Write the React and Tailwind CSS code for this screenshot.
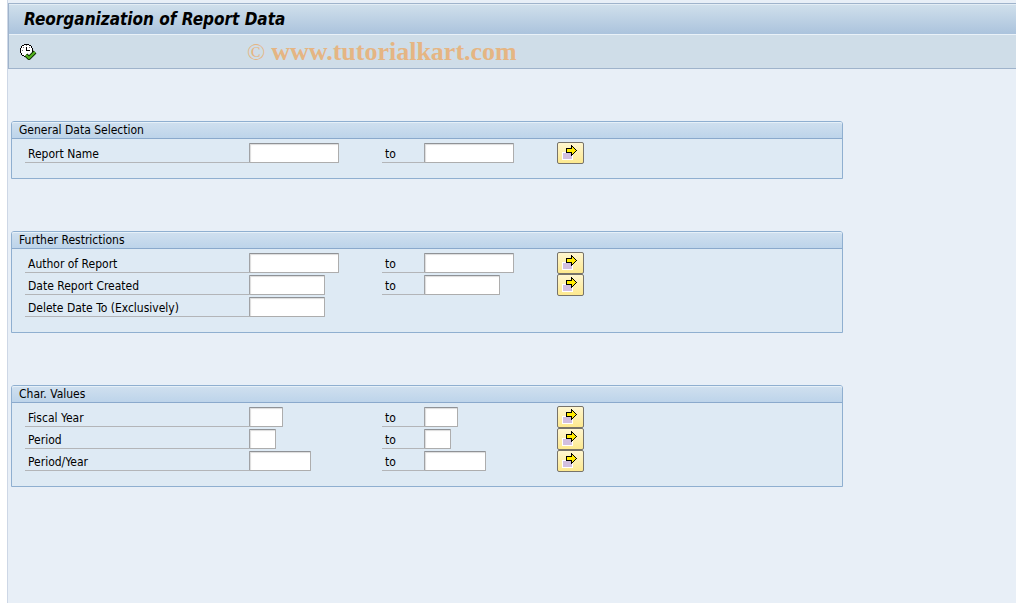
import React from 'react';

const groups = [
  {
    title: 'General Data Selection',
    rows: [{ id: 'report-name', label: 'Report Name', size: 'w-[90px]', range: true }],
  },
  {
    title: 'Further Restrictions',
    rows: [
      { id: 'author', label: 'Author of Report', size: 'w-[90px]', range: true },
      { id: 'created', label: 'Date Report Created', size: 'w-[76px]', range: true },
      { id: 'delete-to', label: 'Delete Date To (Exclusively)', size: 'w-[76px]', range: false },
    ],
  },
  {
    title: 'Char. Values',
    rows: [
      { id: 'fiscal-year', label: 'Fiscal Year', size: 'w-[34px]', range: true },
      { id: 'period', label: 'Period', size: 'w-[27px]', range: true },
      { id: 'period-year', label: 'Period/Year', size: 'w-[62px]', range: true },
    ],
  },
];

function ExecuteIcon() {
  return (
    <svg width="17" height="16" viewBox="0 0 17 16" aria-hidden="true">
      <g shapeRendering="crispEdges">
        <path d="M4 1h5v1h2v2h1v1h1v5h-1v2H4v-1H2V9H1V4h1V2h2z" fill="#fff" />
        <path
          d="M4 0h5v1H4zM2 1h2v1H2zM9 1h2v1H9zM1 2h1v2H1zM11 2h1v2h-1zM12 4h1v4h-1zM0 4h1v5H0zM1 9h1v2H1zM2 11h2v1H2zM4 12h2v1H4z"
          fill="#000"
        />
        <path d="M6 3h1v3h3v1H6z" fill="#000" />
        <path d="M6 1h1v1H6zM2 6h1v1H2zM6 10h1v1H6zM3 3h1v1H3zM9 3h1v1H9z" fill="#777" />
      </g>
      <path d="M6 11l3 3 6-6" fill="none" stroke="#0f2c06" strokeWidth="4" />
      <path d="M6 11l3 3 6-6" fill="none" stroke="#55b51f" strokeWidth="2" />
    </svg>
  );
}

function MultipleSelectionIcon() {
  return (
    <svg width="17" height="16" viewBox="0 0 17 16" shapeRendering="crispEdges" aria-hidden="true">
      <path d="M0 7h11v8H0z" fill="#fff" />
      <path d="M1 8h9v6H1z" fill="#d2bfe0" />
      <path
        d="M9 0h1v1h1v1h1v1h1v1h1v1h1v1h-1v1h-1v1h-1v1h-1v1h-1v1H9V8H4V3h5z"
        fill="#000"
      />
      <path d="M5 4h5V2h1v1h1v1h1v1h1v1h-1v1h-1v1h-1v1h-1V7H5z" fill="#ffeb00" />
    </svg>
  );
}

function Field({ id, size, label }) {
  return (
    <input
      id={id}
      type="text"
      aria-label={label}
      className={`${size} h-5 rounded-[1px] border border-t-[#8f9296] border-l-[#a0a2a5] border-r-[#adadad] border-b-[#adadad] bg-white px-1 shadow-[inset_1px_1px_1px_#dcdcdc] outline-none`}
    />
  );
}

function Row({ row }) {
  return (
    <div className="grid h-[22px] grid-cols-[224px_133px_42px_133px_27px] items-center">
      <label htmlFor={row.id} className="h-5 border-b border-[#b3b5b8] pl-[3px] leading-[22px]">
        {row.label}
      </label>
      <Field id={row.id} size={row.size} />
      {row.range && (
        <>
          <label htmlFor={`${row.id}-to`} className="h-5 border-b border-[#b3b5b8] pl-[3px] leading-[22px]">
            to
          </label>
          <Field id={`${row.id}-to`} size={row.size} label={`${row.label} to`} />
          <button
            type="button"
            aria-label={`Multiple selection for ${row.label}`}
            className="flex h-[22px] w-[27px] items-start justify-center rounded-[2px] border border-[#77736a] bg-linear-to-b from-[#fff6cf] to-[#fde98e] pt-[2px]"
          >
            <MultipleSelectionIcon />
          </button>
        </>
      )}
    </div>
  );
}

function Group({ group }) {
  return (
    <section className="w-full max-w-[832px] rounded-t-[3px] border border-[#8fafd0] bg-[#deeaf4]">
      <h2 className="h-[17px] rounded-t-[2px] border-b border-[#8aa9cc] bg-linear-to-b from-[#d0e0ef] to-[#bdd4ea] pl-[7px] leading-4 shadow-[inset_0_1px_0_#e6f0f8]">
        {group.title}
      </h2>
      <div className="pt-[3px] pb-[14px] pl-[13px]">
        {group.rows.map(row => (
          <Row key={row.id} row={row} />
        ))}
      </div>
    </section>
  );
}

function App() {
  return (
    <div className="min-h-screen bg-white pl-[7px] font-['DejaVu_Sans_Condensed','DejaVu_Sans',sans-serif] text-[12px] text-black">
      <div className="min-h-screen border-l border-[#cdd7e6] bg-[#e8eff7] pt-[3px]">
        <header className="border-y border-l border-[#9fb3cb]">
          <div className="flex h-[30px] items-center border-t border-[#e3edf5] bg-linear-to-b from-[#cfdfeb] to-[#abc3dd] pb-[2px] pl-[15px]">
            <h1 className="text-[17px] leading-5 font-bold italic">Reorganization of Report Data</h1>
          </div>
          <div className="flex h-[34px] items-center border-t border-[#e9f1f8] bg-[#cfdde8] pl-[11px]">
            <button type="button" aria-label="Execute">
              <ExecuteIcon />
            </button>
            <p className="flex items-baseline gap-[6px] pl-[210px] font-['Liberation_Serif',serif] text-[26px] leading-8 text-[#e5b583]">
              <span className="text-[24px]">©</span>
              <span className="font-bold">www.tutorialkart.com</span>
            </p>
          </div>
        </header>
        <main className="flex flex-col gap-[52px] pt-[52px] pr-4 pl-[3px]">
          {groups.map(group => (
            <Group key={group.title} group={group} />
          ))}
        </main>
      </div>
    </div>
  );
}

export default App;
